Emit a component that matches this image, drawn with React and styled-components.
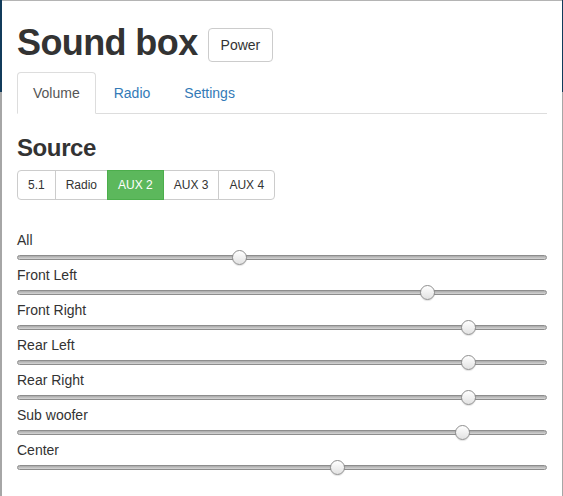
import React from "react"
import styled, { createGlobalStyle } from "styled-components"

const GlobalStyle = createGlobalStyle`
  html, body {
    margin: 0;
    padding: 0;
  }
  body {
    font-family: "Liberation Sans", Arial, sans-serif;
    font-size: 14px;
    color: #333;
  }
`

const Frame = styled.div`
  display: flex;
  min-height: 100vh;
  padding: 0 1px 0 2px;
  box-sizing: border-box;
  background: linear-gradient(to bottom, #113b5b 0, #113b5b 92px, #a6a6a6 92px);
`

const Panel = styled.main`
  flex: 1;
  background: #fff;
  border-top: 1px solid #b4b4b4;
  padding: 0 15px 20px 15px;
`

const Header = styled.header`
  display: flex;
  align-items: flex-start;
  gap: 10px;
  margin-top: 22px;
`

const Title = styled.h1`
  margin: 0;
  font-size: 36px;
  line-height: 40px;
  font-weight: 700;
  letter-spacing: -0.6px;
`

const Button = styled.button`
  font-family: inherit;
  font-size: ${(p) => (p.$small ? "12px" : "14px")};
  line-height: ${(p) => (p.$small ? "18px" : "20px")};
  padding: ${(p) => (p.$small ? "5px 10px" : "6px 12px")};
  color: ${(p) => (p.$active ? "#fff" : "#333")};
  background: ${(p) => (p.$active ? "#5cb85c" : "#fff")};
  border: 1px solid ${(p) => (p.$active ? "#4cae4c" : "#ccc")};
  border-radius: 4px;
  cursor: pointer;
`

const PowerButton = styled(Button)`
  margin-top: 5px;
`

const Tabs = styled.nav`
  display: flex;
  gap: 2px;
  margin-top: 9px;
  border-bottom: 1px solid #ddd;
`

const Tab = styled.a`
  display: block;
  padding: 10px 15px;
  line-height: 20px;
  margin-bottom: -1px;
  border: 1px solid ${(p) => (p.$active ? "#ddd" : "transparent")};
  border-bottom-color: ${(p) => (p.$active ? "#fff" : "transparent")};
  border-radius: 4px 4px 0 0;
  background: ${(p) => (p.$active ? "#fff" : "transparent")};
  color: ${(p) => (p.$active ? "#555" : "#337ab7")};
  text-decoration: none;
`

const SectionTitle = styled.h3`
  margin: 21px 0 9px;
  font-size: 24px;
  line-height: 26px;
  font-weight: 700;
  letter-spacing: -0.4px;
`

const Group = styled.div`
  display: flex;

  & > button {
    border-radius: 0;
    margin-left: -1px;
  }
  & > button:first-child {
    margin-left: 0;
    border-radius: 4px 0 0 4px;
  }
  & > button:last-child {
    border-radius: 0 4px 4px 0;
  }
  & > button[data-active="true"] {
    position: relative;
    z-index: 1;
  }
`

const Channels = styled.div`
  display: flex;
  flex-direction: column;
  margin-top: 30px;
`

const Channel = styled.div`
  display: flex;
  flex-direction: column;
  height: 35px;
`

const Label = styled.label`
  line-height: 20px;
  font-size: 14px;
`

const SliderArea = styled.div`
  position: relative;
  height: 15px;
  display: flex;
  align-items: center;
`

const Track = styled.div`
  flex: 1;
  height: 3px;
  border: 1px solid #8d8d8d;
  border-radius: 3px;
  background: linear-gradient(to bottom, #a9a9a9, #d6d6d6);
`

const Thumb = styled.div`
  position: absolute;
  top: 0;
  width: 13px;
  height: 13px;
  border: 1px solid #8f8f8f;
  border-radius: 50%;
  background: linear-gradient(to bottom, #ffffff, #e2e2e2);
  box-shadow: 0 1px 1px rgba(0, 0, 0, 0.12);
`

const Slider = ({ value }) => (
  <SliderArea>
    <Track />
    <Thumb style={{ left: `calc((100% - 15px) * ${value})` }} />
  </SliderArea>
)

const sources = ["5.1", "Radio", "AUX 2", "AUX 3", "AUX 4"]

const channels = [
  { name: "All", value: 0.418 },
  { name: "Front Left", value: 0.783 },
  { name: "Front Right", value: 0.863 },
  { name: "Rear Left", value: 0.863 },
  { name: "Rear Right", value: 0.863 },
  { name: "Sub woofer", value: 0.85 },
  { name: "Center", value: 0.607 },
]

export default function App() {
  return (
    <>
      <GlobalStyle />
      <Frame>
        <Panel>
          <Header>
            <Title>Sound box</Title>
            <PowerButton>Power</PowerButton>
          </Header>
          <Tabs>
            <Tab $active>Volume</Tab>
            <Tab>Radio</Tab>
            <Tab>Settings</Tab>
          </Tabs>
          <SectionTitle>Source</SectionTitle>
          <Group>
            {sources.map((s) => (
              <Button key={s} $small $active={s === "AUX 2"} data-active={s === "AUX 2"}>
                {s}
              </Button>
            ))}
          </Group>
          <Channels>
            {channels.map((c) => (
              <Channel key={c.name}>
                <Label>{c.name}</Label>
                <Slider value={c.value} />
              </Channel>
            ))}
          </Channels>
        </Panel>
      </Frame>
    </>
  )
}
